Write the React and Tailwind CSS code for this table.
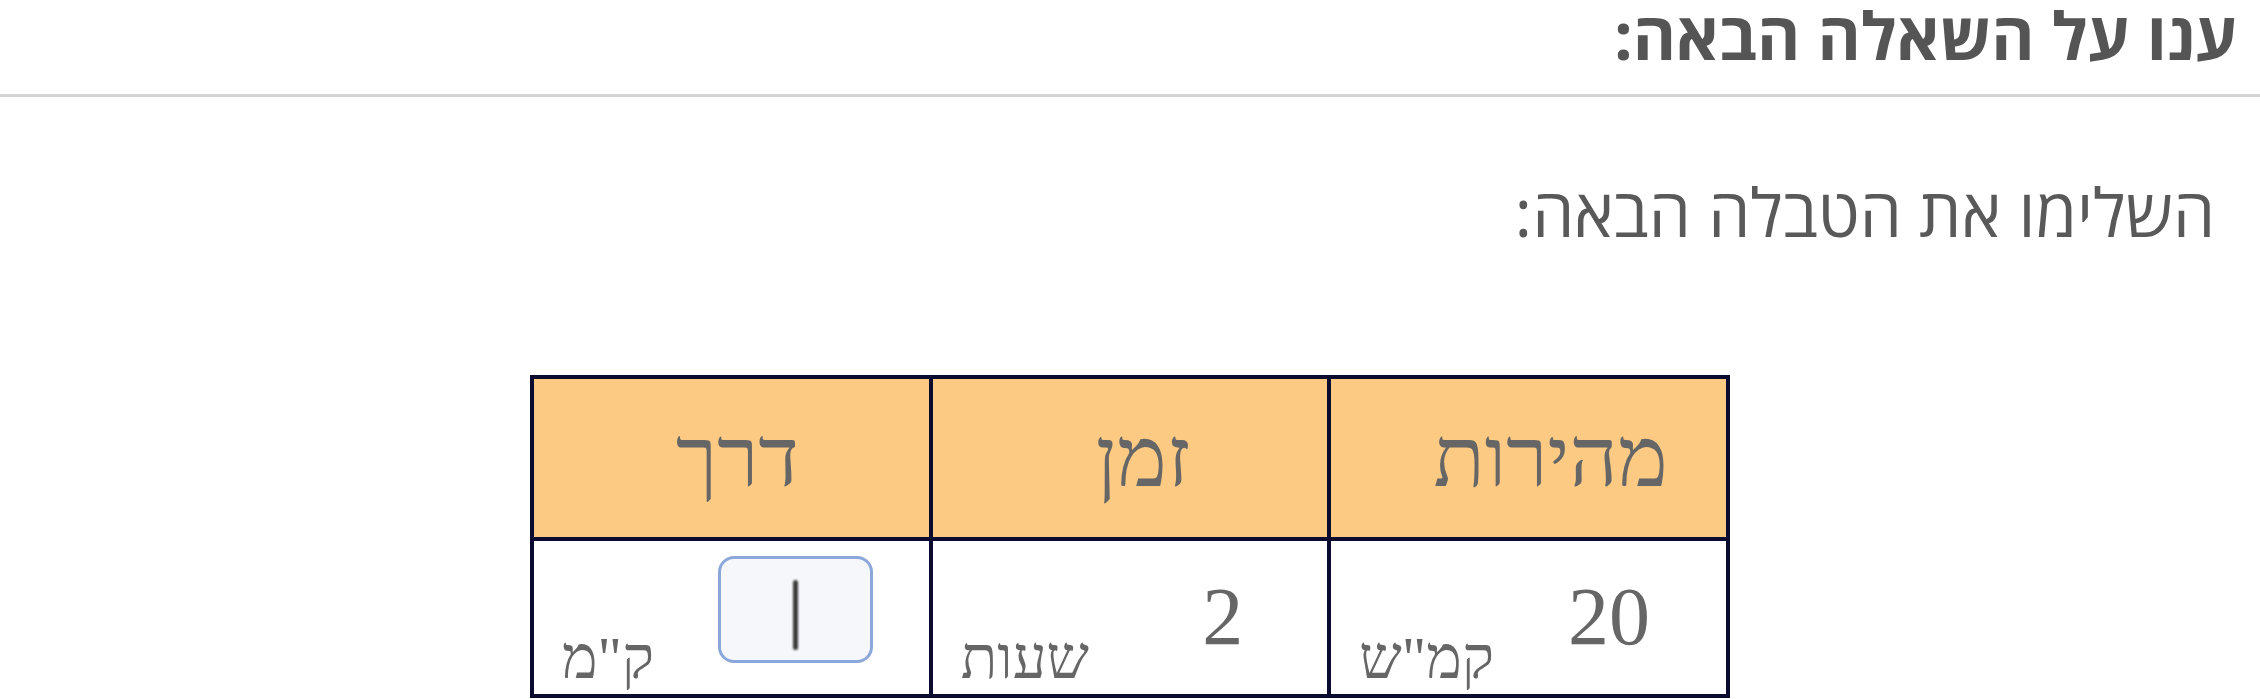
const headers = [
  { label: "מהירות", pad: "pl-[44px]" },
  { label: "זמן", pad: "pl-[26px]" },
  { label: "דרך", pad: "pl-[12px]" },
];

const cells = [
  { value: "20", unit: 'קמ"ש', pad: "mr-[76px]" },
  { value: "2", unit: "שעות", pad: "mr-[84px]" },
  { input: true, unit: 'ק"מ' },
];

function AnswerBox() {
  // empty answer field with a blinking-cursor bar
  return (
    <div className="self-start mt-[15px] mr-[56px] w-[155px] h-[107px] rounded-[16px] border-[3px] border-[#8ca7da] bg-[#f6f7fa] flex items-center justify-center">
      <div className="w-[5px] h-[70px] mt-[10px] rounded-full bg-[#3a3a3a] blur-[0.8px]" />
    </div>
  );
}

export default function App() {
  return (
    <div dir="rtl" className="w-[2260px] h-[699px] bg-white overflow-hidden">
      <div className="h-[97px] border-b-[3px] border-[#d3d3d3] pr-[23px] pt-[1px]">
        <h1 className="text-[66px] leading-none font-bold text-[#555555] font-['Open_Sans','Liberation_Sans',sans-serif]">
          ענו על השאלה הבאה:
        </h1>
      </div>

      <p className="mt-[81px] pr-[45px] text-[67px] leading-none text-[#595959] font-['Open_Sans','Liberation_Sans',sans-serif]">
        השלימו את הטבלה הבאה:
      </p>

      <table className="mx-auto mt-[130px] w-[1200px] table-fixed border-collapse font-['Liberation_Serif',serif] text-[#666666]">
        <thead>
          <tr className="h-[162px]">
            {headers.map((h) => (
              <th
                key={h.label}
                className={`border-[4px] border-[#0b0b30] bg-[#fdca84] font-normal text-[84px] leading-none ${h.pad}`}
              >
                {h.label}
              </th>
            ))}
          </tr>
        </thead>
        <tbody>
          <tr>
            {cells.map((c, i) => (
              <td key={i} className="border-[4px] border-[#0b0b30] p-0 align-top">
                <div className="flex justify-between h-[153px]">
                  {c.input ? (
                    <AnswerBox />
                  ) : (
                    <span className={`self-start mt-[35px] ${c.pad} text-[82px] leading-none`}>
                      {c.value}
                    </span>
                  )}
                  <span className="self-end mb-[6px] ml-[28px] text-[60px] leading-none">
                    {c.unit}
                  </span>
                </div>
              </td>
            ))}
          </tr>
        </tbody>
      </table>
    </div>
  );
}
